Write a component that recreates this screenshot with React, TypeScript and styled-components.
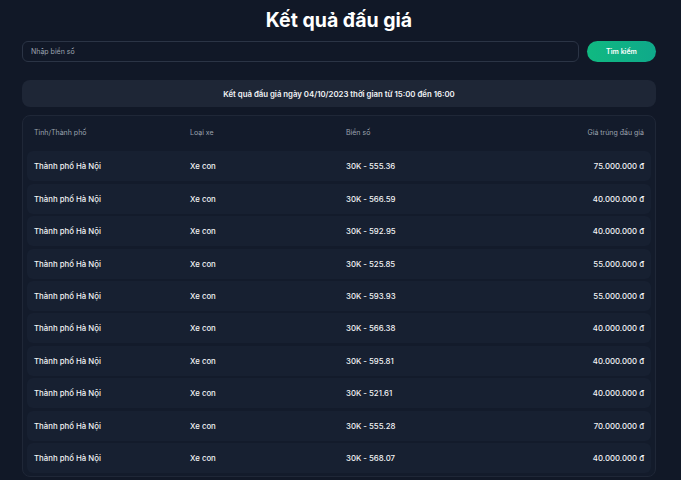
import React from 'react';
import styled, { createGlobalStyle } from 'styled-components';

type TAuction = { city: string; type: string; plate: string; price: string };

const auctions: TAuction[] = [
  { city: 'Thành phố Hà Nội', type: 'Xe con', plate: '30K - 555.36', price: '75.000.000 đ' },
  { city: 'Thành phố Hà Nội', type: 'Xe con', plate: '30K - 566.59', price: '40.000.000 đ' },
  { city: 'Thành phố Hà Nội', type: 'Xe con', plate: '30K - 592.95', price: '40.000.000 đ' },
  { city: 'Thành phố Hà Nội', type: 'Xe con', plate: '30K - 525.85', price: '55.000.000 đ' },
  { city: 'Thành phố Hà Nội', type: 'Xe con', plate: '30K - 593.93', price: '55.000.000 đ' },
  { city: 'Thành phố Hà Nội', type: 'Xe con', plate: '30K - 566.38', price: '40.000.000 đ' },
  { city: 'Thành phố Hà Nội', type: 'Xe con', plate: '30K - 595.81', price: '40.000.000 đ' },
  { city: 'Thành phố Hà Nội', type: 'Xe con', plate: '30K - 521.61', price: '40.000.000 đ' },
  { city: 'Thành phố Hà Nội', type: 'Xe con', plate: '30K - 555.28', price: '70.000.000 đ' },
  { city: 'Thành phố Hà Nội', type: 'Xe con', plate: '30K - 568.07', price: '40.000.000 đ' },
];

const App = () => {
  return (
    <>
      <GlobalStyle />
      <PageLayout>
        <Title>Kết quả đấu giá</Title>

        {/* tìm kiếm */}
        <SearchBar>
          <SearchInput placeholder="Nhập biển số" />
          <SearchButton>Tìm kiếm</SearchButton>
        </SearchBar>

        <InfoBar>Kết quả đấu giá ngày 04/10/2023 thời gian từ 15:00 đến 16:00</InfoBar>

        {/* bảng kết quả */}
        <TableCard>
          <HeadRow>
            <Cell>Tỉnh/Thành phố</Cell>
            <Cell>Loại xe</Cell>
            <Cell>Biển số</Cell>
            <Cell alignRight>Giá trúng đấu giá</Cell>
          </HeadRow>
          {auctions.map((item, i) => (
            <BodyRow key={i}>
              <Cell>{item.city}</Cell>
              <Cell>{item.type}</Cell>
              <Cell>{item.plate}</Cell>
              <Cell alignRight>{item.price}</Cell>
            </BodyRow>
          ))}
        </TableCard>
      </PageLayout>
    </>
  );
};
export default App;

// --- Styled Components ---
type TCell = { alignRight?: boolean };

const GlobalStyle = createGlobalStyle`
  html, body {
    margin: 0;
    background: #111827;
    font-family: Inter, "Noto Sans", sans-serif;
    color: #f3f4f6;
  }
  * { box-sizing: border-box; }
`;

const PageLayout = styled.div`
  width: 634px;
  margin-left: 22px;
  padding-top: 6px;
  display: flex;
  flex-direction: column;
`;

const Title = styled.h1`
  margin: 0;
  text-align: center;
  font-size: 19.5px;
  font-weight: 700;
  line-height: 28px;
  color: #ffffff;
`;

const SearchBar = styled.div`
  display: flex;
  column-gap: 8px;
  margin-top: 7px;
`;

const SearchInput = styled.input`
  flex: 1;
  height: 21px;
  border: 1px solid #2b3445;
  border-radius: 6px;
  background: #111827;
  padding: 0 8px;
  font-family: inherit;
  font-size: 7px;
  color: #e5e7eb;
  outline: none;

  &::placeholder {
    color: #9ca3af;
  }
`;

const SearchButton = styled.button`
  width: 69px;
  height: 21px;
  border: none;
  border-radius: 11px;
  background: linear-gradient(90deg, #10b981, #0fa98a);
  color: #ffffff;
  font-family: inherit;
  font-size: 7px;
  font-weight: 600;
`;

const InfoBar = styled.div`
  margin-top: 18px;
  height: 27px;
  border-radius: 8px;
  background: #1e2636;
  display: flex;
  align-items: center;
  justify-content: center;
  font-size: 7.8px;
  font-weight: 600;
  color: #f3f4f6;
`;

const TableCard = styled.div`
  margin-top: 8px;
  border: 1px solid #1f2737;
  border-radius: 8px;
  background: #131b2b;
  padding: 0 4px 3px;
  display: flex;
  flex-direction: column;
  row-gap: 2.4px;
`;

const HeadRow = styled.div`
  display: grid;
  grid-template-columns: repeat(4, 1fr);
  height: 33px;
  align-items: center;
  font-size: 7px;
  color: #9ca3af;
`;

const BodyRow = styled.div`
  display: grid;
  grid-template-columns: repeat(4, 1fr);
  height: 30px;
  align-items: center;
  border-radius: 6px;
  background: #172031;
  font-size: 7.8px;
  font-weight: 500;
  color: #f3f4f6;
`;

const Cell = styled.div<TCell>`
  padding: 0 7px;
  text-align: ${({ alignRight }) => (alignRight ? 'right' : 'left')};
  white-space: nowrap;
`;
